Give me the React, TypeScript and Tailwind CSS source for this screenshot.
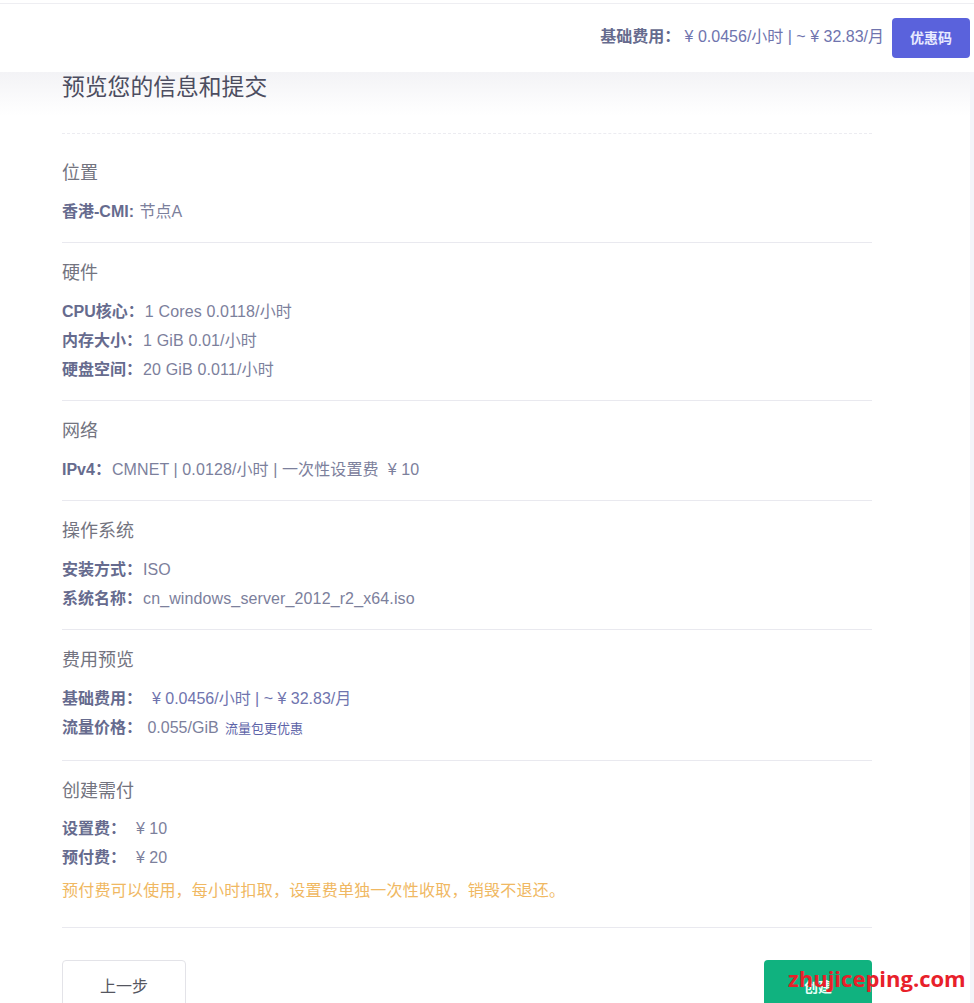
const font = { fontFamily: '"Liberation Sans", "Noto Sans CJK SC", sans-serif' }

type Row = { label: string; value: React.ReactNode; valueClass?: string }

type SectionProps = {
  title:      string
  rows:       Row[]
  note?:      string
  topClass?:  string
  gapClass?:  string
  endClass?:  string
}

function Section(props: SectionProps): React.JSX.Element {
  return (
    <section className={`${props.topClass ?? 'pt-[18px]'} ${props.endClass ?? 'pb-4'} border-b border-[#e9e9ef]`}>
      <h3 className={`h-6 ${props.gapClass ?? 'mb-3'} text-[18px] leading-6 font-normal text-[#73747f]`}>{props.title}</h3>
      {props.rows.map((row) => (
        <div key={row.label} className="flex h-[29px] items-center text-[16px] text-[#7c809c]">
          <span className="pr-px font-bold text-[#666b8e] whitespace-pre">{row.label}</span>
          <span className={`whitespace-pre ${row.valueClass ?? ''}`}>{row.value}</span>
        </div>
      ))}
      {props.note !== undefined && (
        <p className="mt-[7px] h-6 text-[16px] leading-6 tracking-[0.23px] text-[#f0b862]">{props.note}</p>
      )}
    </section>
  )
}

export default function App(): React.JSX.Element {
  return (
    <div style={font} className="relative h-[1003px] w-[974px] overflow-hidden bg-white">
      <header className="h-[72px] border-t border-[#eeeef2] mt-[3px] -mb-[3px] flex items-center justify-end pr-1 pb-[3px] gap-2 bg-white">
        <div className="flex items-center pb-0.5 text-[16px] whitespace-pre">
          <span className="font-bold text-[#666b8e]">基础费用： </span>
          <span className="text-[#6f74ae]">¥ 0.0456/小时 | ~ ¥ 32.83/月</span>
        </div>
        <button type="button" className="h-10 w-[78px] rounded bg-[#5a62dc] text-[14px] font-bold text-[#e8eaff]">优惠码</button>
      </header>

      <main className="h-[931px] border-r-4 border-[#f4f4f9] bg-gradient-to-b from-[#f3f3f6] to-white to-[44px] pl-[62px] pr-[98px]">
        <div className="h-[62px] border-b border-dashed border-[#ececf1]">
          <h2 className="text-[22.8px] leading-[30px] font-normal text-[#4c4d60]">预览您的信息和提交</h2>
        </div>

        <Section topClass="pt-[27px]" title="位置" rows={[{ label: '香港-CMI: ', value: '节点A' }]} />
        <Section
          title="硬件"
          rows={[
            { label: 'CPU核心：', value: '1 Cores 0.0118/小时', valueClass: 'tracking-[0.15px]' },
            { label: '内存大小：', value: '1 GiB 0.01/小时', valueClass: 'tracking-[0.15px]' },
            { label: '硬盘空间：', value: '20 GiB 0.011/小时', valueClass: 'tracking-[0.15px]' },
          ]}
        />
        <Section title="网络" rows={[{ label: 'IPv4：', value: 'CMNET | 0.0128/小时 | 一次性设置费  ¥ 10', valueClass: 'tracking-[0.1px]' }]} />
        <Section
          title="操作系统"
          rows={[
            { label: '安装方式：', value: 'ISO' },
            { label: '系统名称：', value: 'cn_windows_server_2012_r2_x64.iso', valueClass: 'tracking-[0.12px]' },
          ]}
        />
        <Section
          endClass="pb-[18px]"
          title="费用预览"
          rows={[
            { label: '基础费用：', value: '  ¥ 0.0456/小时 | ~ ¥ 32.83/月', valueClass: 'text-[#6f74ae]' },
            {
              label: '流量价格：',
              value: (
                <>
                  {' 0.055/GiB '}
                  <span className="ml-0.5 text-[13px] text-[#5d63a8]">流量包更优惠</span>
                </>
              ),
            },
          ]}
        />
        <Section
          gapClass="mb-[11px]"
          endClass="pb-6"
          title="创建需付"
          note="预付费可以使用，每小时扣取，设置费单独一次性收取，销毁不退还。"
          rows={[
            { label: '设置费：', value: '  ¥ 10' },
            { label: '预付费：', value: '  ¥ 20' },
          ]}
        />

        <div className="flex justify-between pt-8">
          <button type="button" className="h-[54px] w-[124px] rounded border border-[#e3e3e8] bg-white text-[16px] text-[#55565f]">上一步</button>
          <button type="button" className="h-[54px] w-[108px] rounded bg-[#10b27f] text-[14px] font-bold text-[#e9fff7]">创建</button>
        </div>
      </main>

      <span className="absolute left-[788px] top-[962px] text-[22px] leading-8 font-bold text-[#e8202a]" style={{ fontFamily: '"Open Sans", sans-serif' }}>zhujiceping.com</span>
    </div>
  )
}
